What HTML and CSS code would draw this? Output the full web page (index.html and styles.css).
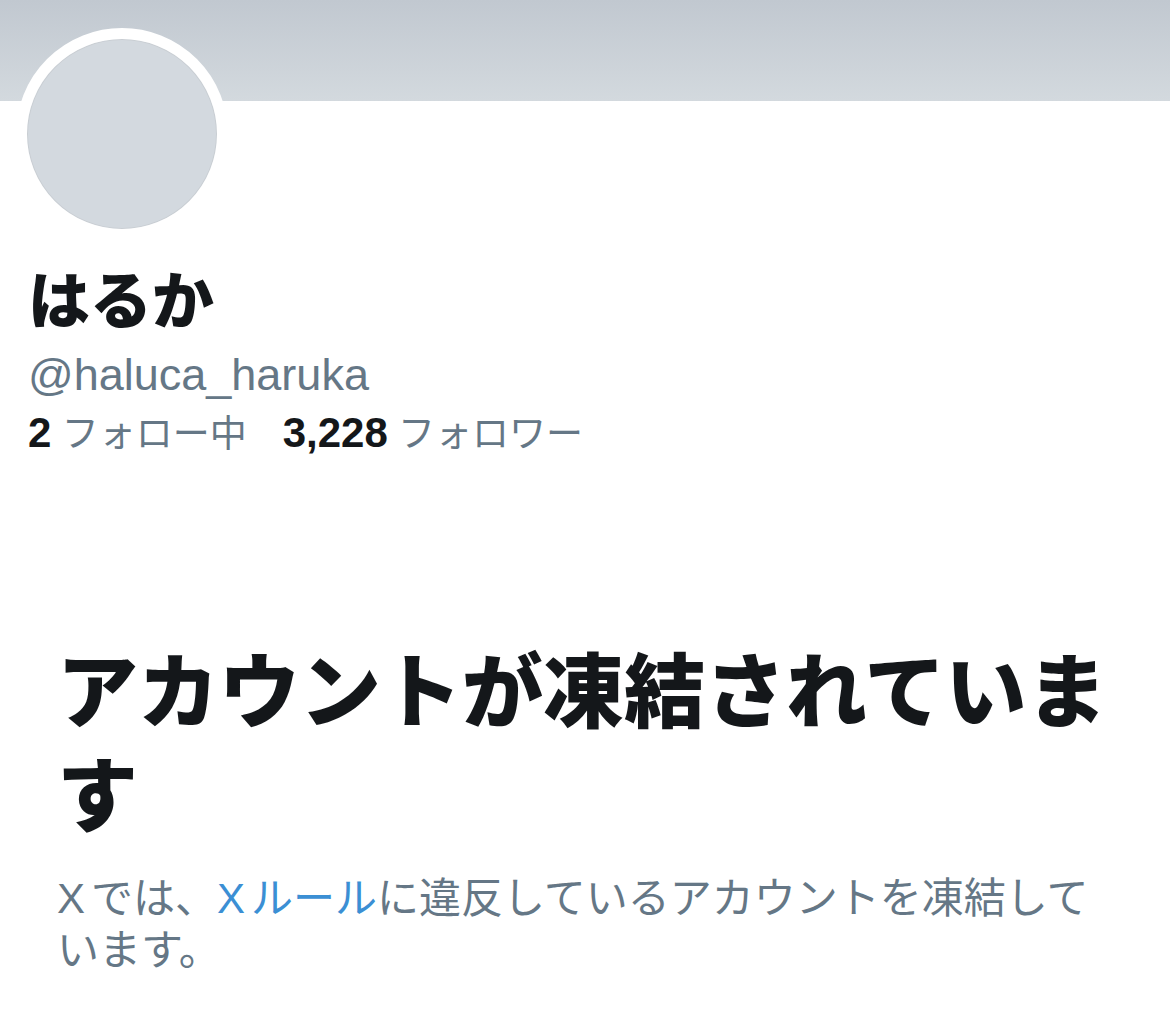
FILE: index.html
```html
<!DOCTYPE html>
<html lang="ja">
  <head>
    <meta charset="UTF-8" />
    <meta name="viewport" content="width=device-width, initial-scale=1.0" />
    <title>はるか (@haluca_haruka)</title>
    <link rel="stylesheet" href="styles.css">
  </head>

  <body>
    <!-- header image (empty for suspended accounts) -->
    <div class="banner"></div>

    <div class="profile">
      <div class="avatar"></div>
      <h1 class="name">はるか</h1>
      <div class="handle">@haluca_haruka</div>
      <div class="stats">
        <span class="stat"><b class="num">2</b> フォロー中</span>
        <span class="stat"><b class="num">3,228</b> フォロワー</span>
      </div>
    </div>

    <div class="notice">
      <h2 class="notice-title">アカウントが凍結されています</h2>
      <p class="notice-text">
        <span class="latin">X</span>では、<a href="#" class="rules"><span class="latin">X</span>ルール</a>に違反しているアカウントを凍結しています。
      </p>
    </div>
  </body>
</html>
```

FILE: styles.css
```css
* {
  box-sizing: border-box;
}

body {
  margin: 0;
  background: white;
  color: #14171a;
  font-family: "Liberation Sans", "Noto Sans CJK JP", sans-serif;
}

.banner {
  height: 101px;
  background: linear-gradient(to bottom, #c1c8d0, #d3d9de);
}

.profile {
  padding: 0 28px;
}

.avatar {
  width: 212px;
  height: 212px;
  margin-top: -73px;
  margin-left: -12px;
  border-radius: 50%;
  border: 11px solid white;
  background-color: #d3d9df;
  box-shadow: inset 0 0 0 1px #c9ced3;
}

.name {
  margin: 21px 0 0;
  font-family: "Noto Sans CJK JP", sans-serif;
  font-size: 62px;
  font-weight: 900;
  line-height: 72px;
}

.handle {
  margin-top: 16px;
  font-size: 45px;
  line-height: 52px;
  color: #657786;
}

.stats {
  display: flex;
  gap: 36px;
  margin-top: 8px;
  font-size: 37px;
  line-height: 48px;
  color: #657786;
}

.num {
  color: #14171a;
  font-size: 42px;
}

.notice {
  padding: 175px 57px 40px;
}

.notice-title {
  margin: 0;
  font-family: "Noto Sans CJK JP", sans-serif;
  font-size: 81px;
  font-weight: 900;
  line-height: 104px;
}

.notice-text {
  margin: 31px 0 0;
  font-size: 42px;
  line-height: 52px;
  color: #657786;
}

.latin {
  margin-right: 6px;
}

.rules {
  color: #3b8fd4;
  text-decoration: none;
}
```
